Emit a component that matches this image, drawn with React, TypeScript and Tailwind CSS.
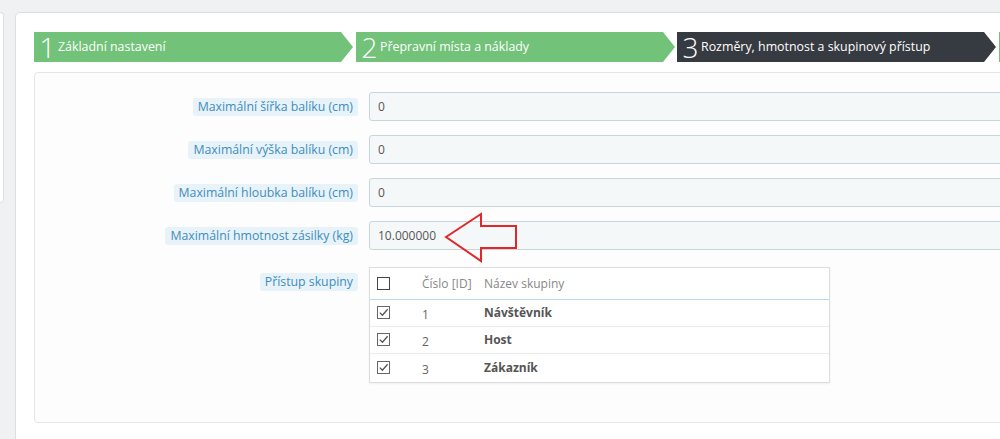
import React from "react";

const font = "font-['Open_Sans','Liberation_Sans',sans-serif]";

type Step = { n?: number; label?: string; active?: boolean };

// the 4th step is only a sliver at the right edge
const steps: Step[] = [
  { n: 1, label: "Základní nastavení" },
  { n: 2, label: "Přepravní místa a náklady" },
  { n: 3, label: "Rozměry, hmotnost a skupinový přístup", active: true },
  {},
];

const fields = [
  { label: "Maximální šířka balíku (cm)", value: "0" },
  { label: "Maximální výška balíku (cm)", value: "0" },
  { label: "Maximální hloubka balíku (cm)", value: "0" },
  { label: "Maximální hmotnost zásilky (kg)", value: "10.000000" },
];

const groups = [
  { id: 1, name: "Návštěvník" },
  { id: 2, name: "Host" },
  { id: 3, name: "Zákazník" },
];

function Checkbox({ checked }: { checked?: boolean }) {
  return (
    <svg width="13" height="13" viewBox="0 0 13 13" className="block">
      <rect x="0.5" y="0.5" width="12" height="12" fill="#fff" stroke={checked ? "#666" : "#444"} />
      {checked && (
        <path d="M2.8 6.6 L5.4 9.2 L10.6 3.2" fill="none" stroke="#555" strokeWidth="1.3" />
      )}
    </svg>
  );
}

function Label({ children }: { children: React.ReactNode }) {
  return (
    <span className="inline-block rounded-[3px] bg-[#e7f3f9] px-[5px] py-[1px] text-[12.3px] leading-[16px] text-[#3f8dbd]">
      {children}
    </span>
  );
}

export default function App() {
  return (
    <div className={`relative flex h-[439px] w-[1000px] items-start overflow-hidden bg-[#eff1f2] ${font}`}>
      {/* left card edge */}
      <div className="mt-[12px] h-[191px] w-[4px] flex-none rounded-r-[4px] border border-l-0 border-[#dcdfe1] bg-white" />

      {/* main card */}
      <div className="ml-[11px] mt-[12px] h-[460px] w-[1040px] flex-none rounded-[5px] border border-[#dcdfe1] bg-white pl-[18px] pt-[19px]">
        {/* wizard steps */}
        <div className="flex h-[30px]">
          {steps.map((s, i) => (
            <div
              key={i}
              className={`flex h-[30px] w-[319px] flex-none items-center pl-[5px] text-white [clip-path:polygon(0_0,calc(100%-12px)_0,100%_50%,calc(100%-12px)_100%,0_100%)] ${
                s.active ? "bg-[#363a41]" : "bg-[#72c279]"
              } ${i === 1 ? "ml-[3px]" : i === 2 ? "ml-[2px]" : i === 3 ? "ml-[3px]" : ""}`}
            >
              {s.n && (
                <>
                  <span className="w-[17px] text-center text-[28px] font-light leading-[30px]">{s.n}</span>
                  <span className="ml-[2px] text-[12.4px]">{s.label}</span>
                </>
              )}
            </div>
          ))}
        </div>

        {/* form panel */}
        <div className="mt-[10px] h-[351px] rounded-[4px] border border-[#e6e6e6] bg-[#fdfdfd] pt-[19px]">
          <div className="flex flex-col gap-[14px]">
            {fields.map((f) => (
              <div key={f.label} className="flex items-center">
                <div className="flex w-[323px] flex-none justify-end">
                  <Label>{f.label}</Label>
                </div>
                <div className="ml-[11px] flex h-[29px] flex-1 items-center rounded-[3px] border border-[#c7d6db] bg-[#f5f8f9] pl-[8px] text-[12px] text-[#555]">
                  {f.value}
                </div>
              </div>
            ))}
          </div>

          {/* group access */}
          <div className="mt-[17px] flex items-start">
            <div className="flex w-[323px] flex-none justify-end pt-[6px]">
              <Label>Přístup skupiny</Label>
            </div>
            <div className="ml-[11px] w-[461px] flex-none border border-[#dddddd] bg-white text-[12px] shadow-[0_1px_2px_rgba(0,0,0,0.06)]">
              <div className="flex h-[32px] items-center border-b border-[#b9dcec] pl-[7px] text-[#888]">
                <div className="w-[45px]">
                  <Checkbox />
                </div>
                <div className="w-[62px]">Číslo [ID]</div>
                <div>Název skupiny</div>
              </div>
              {groups.map((g, i) => (
                <div
                  key={g.id}
                  className={`flex h-[27px] items-center pl-[7px] ${i < groups.length - 1 ? "border-b border-[#eaedef]" : "h-[28px]"}`}
                >
                  <div className="-mt-[2px] w-[45px]">
                    <Checkbox checked />
                  </div>
                  <div className="w-[62px] pt-[3px] text-[#666]">{g.id}</div>
                  <div className="font-bold text-[#555]">{g.name}</div>
                </div>
              ))}
            </div>
          </div>
        </div>
      </div>

      {/* red annotation arrow */}
      <svg
        className="pointer-events-none absolute left-[440px] top-[208px]"
        width="82"
        height="60"
        viewBox="0 0 82 60"
      >
        <polygon
          points="6,29 41,6 41,18 76,18 76,40 41,40 41,53"
          fill="none"
          stroke="#e3262a"
          strokeWidth="2"
          strokeLinejoin="miter"
        />
      </svg>
    </div>
  );
}
